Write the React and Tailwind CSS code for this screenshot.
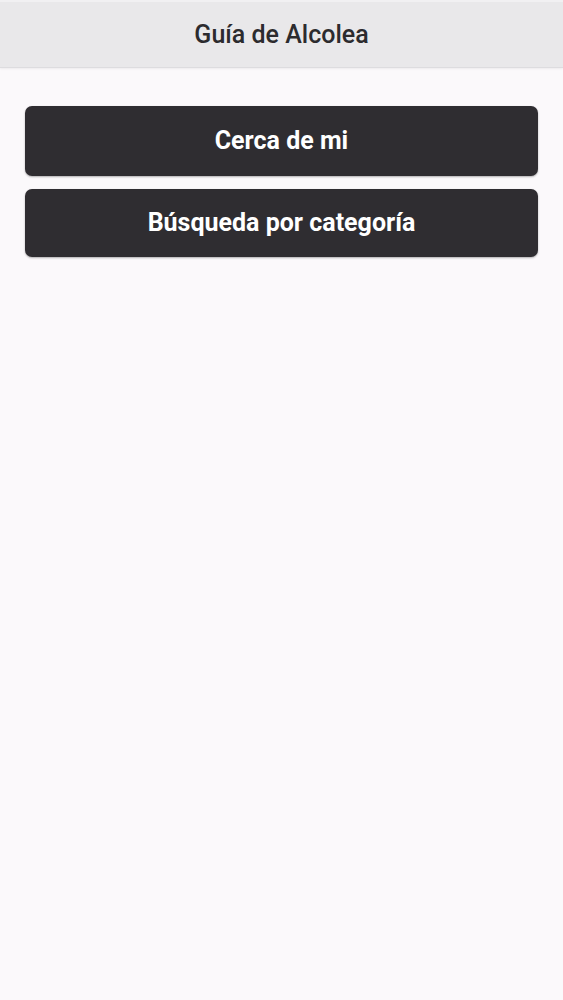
export default function App() {
  return (
    <div className="min-h-screen bg-[#fbf9fb]" style={{ fontFamily: "Roboto, 'Liberation Sans', sans-serif" }}>
      {/* Header */}
      <header className="h-[68px] flex items-center justify-center bg-[#e9e8ea] border-t-2 border-t-[#f1f0f2] border-b border-b-[#dddcdf] shadow-[0_1px_2px_rgba(0,0,0,0.06)]">
        <h1 className="text-[25px] font-medium text-[#2c2b2e]">Guía de Alcolea</h1>
      </header>

      {/* Menu */}
      <div className="px-[25px] pt-[38px] flex flex-col gap-[13px]">
        <button className="h-[70px] w-full rounded-[7px] bg-[#2f2d31] text-white text-[25px] font-bold shadow-[0_1px_2px_rgba(0,0,0,0.3)]">
          Cerca de mi
        </button>
        <button className="h-[68px] w-full rounded-[7px] bg-[#2f2d31] text-white text-[25px] font-bold shadow-[0_1px_2px_rgba(0,0,0,0.3)]">
          Búsqueda por categoría
        </button>
      </div>
    </div>
  );
}
